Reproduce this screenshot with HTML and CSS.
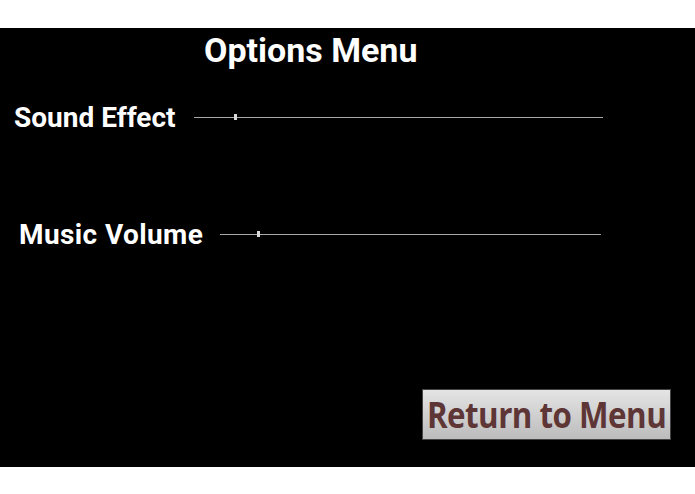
FILE: index.html
```html
<!DOCTYPE html>
<html>
<head>
<meta charset="utf-8">
<link rel="stylesheet" href="styles.css">
</head>
<body>
<div class="screen">
  <h1 class="title">Options Menu</h1>
  <div class="row row-sound">
    <span class="label">Sound Effect</span>
    <div class="slider slider-sound"><span class="thumb" style="left:40px"></span></div>
  </div>
  <div class="row row-music">
    <span class="label label-music">Music Volume</span>
    <div class="slider slider-music"><span class="thumb" style="left:37px"></span></div>
  </div>
  <div class="footer">
    <button class="btn"><span class="btn-text">Return to Menu</span></button>
  </div>
</div>
</body>
</html>
```
FILE: styles.css
```css
html, body {
  margin: 0;
  padding: 0;
  background: #ffffff;
}
.screen {
  margin-top: 28px;
  height: 439px;
  background: #000000;
  display: flex;
  flex-direction: column;
  font-family: Roboto, "Liberation Sans", sans-serif;
  color: #ffffff;
}
.title {
  margin: 0;
  padding: 2px 0 0 204px;
  font-size: 34px;
  font-weight: 700;
  line-height: 40px;
  height: 40px;
}
.row {
  display: flex;
  align-items: center;
  height: 40px;
}
.row-sound {
  margin-top: 28px;
  padding-left: 14px;
}
.row-music {
  margin-top: 77px;
  padding-left: 19px;
}
.label {
  font-size: 28px;
  font-weight: 700;
  line-height: 40px;
}
.label-music {
  letter-spacing: 0.4px;
}
.slider {
  position: relative;
  height: 1px;
  margin-top: -1px;
  background: #a8a8a8;
}
.slider-sound {
  margin-left: 18px;
  width: 409px;
}
.slider-music {
  margin-left: 17px;
  width: 381px;
}
.thumb {
  position: absolute;
  top: -3px;
  width: 3px;
  height: 6px;
  background: #d8d8d8;
}
.footer {
  display: flex;
  justify-content: flex-end;
  padding-right: 24px;
  margin-top: 134px;
}
.btn {
  box-sizing: border-box;
  width: 249px;
  height: 51px;
  padding: 0;
  border: 1px solid #444;
  background: linear-gradient(#e4e4e4, #bcbcbc);
  display: flex;
  align-items: center;
  justify-content: center;
  overflow: hidden;
}
.btn-text {
  display: inline-block;
  font-family: "Open Sans", "Liberation Sans", sans-serif;
  font-weight: 700;
  font-size: 36px;
  line-height: 49px;
  color: #5e3636;
  letter-spacing: -0.6px;
  white-space: nowrap;
  transform: scaleX(0.87);
}
```
